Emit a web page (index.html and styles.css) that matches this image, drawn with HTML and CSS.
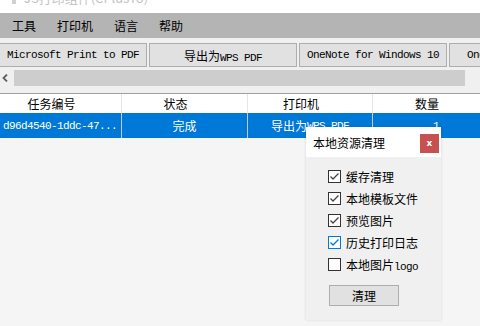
FILE: index.html
```html
<!DOCTYPE html>
<html lang="zh-CN">
<head>
    <meta charset="UTF-8">
    <meta name="viewport" content="width=device-width, initial-scale=1.0">
    <title>打印组件</title>
    <link rel="stylesheet" href="styles.css">
</head>
<body>

<div class="titlebar">
    <span class="app-icon"></span>
    <span class="title-text">JS打印组件(CPlusTo)</span>
</div>

<div class="menubar">
    <span>工具</span>
    <span>打印机</span>
    <span>语言</span>
    <span>帮助</span>
</div>

<div class="printers">
    <button class="printer-btn mono">Microsoft Print to PDF</button>
    <button class="printer-btn">导出为<span class="mono">WPS PDF</span></button>
    <button class="printer-btn mono">OneNote for Windows 10</button>
    <button class="printer-btn mono clipped">OneNote (Desktop)</button>
</div>

<div class="hscroll">
    <span class="scroll-arrow">
        <svg width="6" height="8" viewBox="0 0 6 8"><polyline points="5,0.5 1.5,4 5,7.5" fill="none" stroke="#606060" stroke-width="1.8"/></svg>
    </span>
    <div class="scroll-thumb"></div>
</div>

<div class="grid">
    <div class="grid-head">
        <div class="cell">任务编号</div>
        <div class="cell">状态</div>
        <div class="cell">打印机</div>
        <div class="cell">数量</div>
    </div>
    <div class="grid-row selected">
        <div class="cell left mono">d96d4540-1ddc-47...</div>
        <div class="cell">完成</div>
        <div class="cell">导出为<span class="mono">WPS PDF</span></div>
        <div class="cell mono">1</div>
    </div>
</div>

<!-- 本地资源清理 对话框 -->
<div class="dialog">
    <div class="dialog-title">
        <span>本地资源清理</span>
        <span class="close-btn">x</span>
    </div>
    <div class="dialog-body">
        <label class="check-row">
            <svg class="box" width="13" height="13" viewBox="0 0 13 13"><rect x="0.5" y="0.5" width="12" height="12" fill="#fff" stroke="#333"/><polyline points="2.5,6.5 5,9 10.5,3.5" fill="none" stroke="#444" stroke-width="1.3"/></svg>
            <span>缓存清理</span>
        </label>
        <label class="check-row">
            <svg class="box" width="13" height="13" viewBox="0 0 13 13"><rect x="0.5" y="0.5" width="12" height="12" fill="#fff" stroke="#333"/><polyline points="2.5,6.5 5,9 10.5,3.5" fill="none" stroke="#444" stroke-width="1.3"/></svg>
            <span>本地模板文件</span>
        </label>
        <label class="check-row">
            <svg class="box" width="13" height="13" viewBox="0 0 13 13"><rect x="0.5" y="0.5" width="12" height="12" fill="#fff" stroke="#333"/><polyline points="2.5,6.5 5,9 10.5,3.5" fill="none" stroke="#444" stroke-width="1.3"/></svg>
            <span>预览图片</span>
        </label>
        <label class="check-row">
            <svg class="box" width="13" height="13" viewBox="0 0 13 13"><rect x="0.5" y="0.5" width="12" height="12" fill="#fff" stroke="#0078d7"/><polyline points="2.5,6.5 5,9 10.5,3.5" fill="none" stroke="#0078d7" stroke-width="1.3"/></svg>
            <span>历史打印日志</span>
        </label>
        <label class="check-row">
            <svg class="box" width="13" height="13" viewBox="0 0 13 13"><rect x="0.5" y="0.5" width="12" height="12" fill="#fff" stroke="#333"/></svg>
            <span>本地图片<span class="mono">logo</span></span>
        </label>
        <button class="clean-btn">清理</button>
    </div>
</div>

</body>
</html>
```

FILE: styles.css
```css
body {
    margin: 0;
    width: 480px;
    height: 326px;
    overflow: hidden;
    position: relative;
    background-color: #f5f5f5;
    font-family: "Noto Sans CJK SC", sans-serif;
    font-size: 12px;
    color: #000;
}

.mono {
    font-family: "Liberation Mono", monospace;
    font-size: 11px;
    letter-spacing: -0.6px;
}

.titlebar {
    height: 13px;
    background-color: #fff;
    overflow: hidden;
    display: flex;
    gap: 8px;
    padding-left: 12px;
}

.app-icon {
    width: 4px;
    height: 4px;
    background-color: #d0d0d0;
}

.title-text {
    margin-top: -9px;
    font-size: 13px;
    line-height: 13px;
    color: #c4c4c4;
}

.menubar {
    height: 25px;
    background-color: #b4b4b4;
    display: flex;
    align-items: center;
    gap: 21px;
    padding-left: 12px;
}

.printers {
    background-color: #f0f0f0;
    padding-top: 5px;
    display: flex;
    gap: 2px;
    margin-left: -1px;
    overflow: hidden;
}

.printer-btn {
    flex: none;
    width: 148px;
    height: 24px;
    padding: 0;
    background-color: #e1e1e1;
    border: 1px solid #adadad;
    font-family: "Noto Sans CJK SC", sans-serif;
    font-size: 12px;
    color: #000;
    white-space: nowrap;
    overflow: hidden;
}

.printer-btn.mono {
    font-family: "Liberation Mono", monospace;
    font-size: 11px;
}

.printer-btn.clipped {
    display: flex;
    align-items: center;
    justify-content: flex-start;
    padding-left: 17px;
}

.hscroll {
    height: 26px;
    background-color: #f0f0f0;
    display: flex;
    align-items: flex-start;
    padding-top: 3px;
    box-sizing: border-box;
}

.scroll-arrow {
    width: 14px;
    height: 16px;
    display: flex;
    align-items: center;
    padding-left: 2px;
    box-sizing: border-box;
}

.scroll-thumb {
    width: 451px;
    height: 16px;
    background-color: #cdcdcd;
}

.grid {
    border-top: 1px solid #a0a0a0;
}

.grid-head,
.grid-row {
    display: grid;
    grid-template-columns: 122px 126px 125px 127px;
}

.grid-head {
    height: 19px;
    background-color: #fff;
}

.grid-row {
    height: 25px;
}

.cell {
    display: flex;
    align-items: center;
    justify-content: center;
    white-space: nowrap;
    overflow: hidden;
    border-right: 1px solid #e5e5e5;
}

.grid-head .cell {
    padding-right: 18px;
}

.grid-row .cell {
    border-right-color: #c8c8c8;
}

.cell.left {
    justify-content: flex-start;
    padding-left: 3px;
}

.selected {
    background-color: #0078d7;
    color: #fff;
}

.dialog {
    position: absolute;
    left: 306px;
    top: 127px;
    width: 135px;
    height: 193px;
    background-color: #f0f0f0;
    box-shadow: 0 0 3px rgba(0, 0, 0, 0.12);
}

.dialog-title {
    height: 30px;
    background-color: #fff;
    display: flex;
    align-items: center;
    justify-content: space-between;
    padding: 0 2px 0 7px;
    font-size: 12px;
}

.close-btn {
    width: 19px;
    height: 19px;
    margin-top: 2px;
    background-color: #c75050;
    color: #fff;
    font-family: "DejaVu Sans", sans-serif;
    font-size: 9px;
    font-weight: bold;
    display: flex;
    align-items: center;
    justify-content: center;
}

.dialog-body {
    padding: 13px 0 0 22px;
    display: flex;
    flex-direction: column;
}

.check-row {
    height: 22px;
    display: flex;
    align-items: flex-start;
    gap: 5px;
    line-height: 13px;
}

.box {
    flex: none;
}

.clean-btn {
    margin-top: 5px;
    margin-left: 1px;
    width: 70px;
    height: 21px;
    padding: 0;
    background-color: #e1e1e1;
    border: 1px solid #adadad;
    font-family: "Noto Sans CJK SC", sans-serif;
    font-size: 12px;
    color: #000;
}
```
